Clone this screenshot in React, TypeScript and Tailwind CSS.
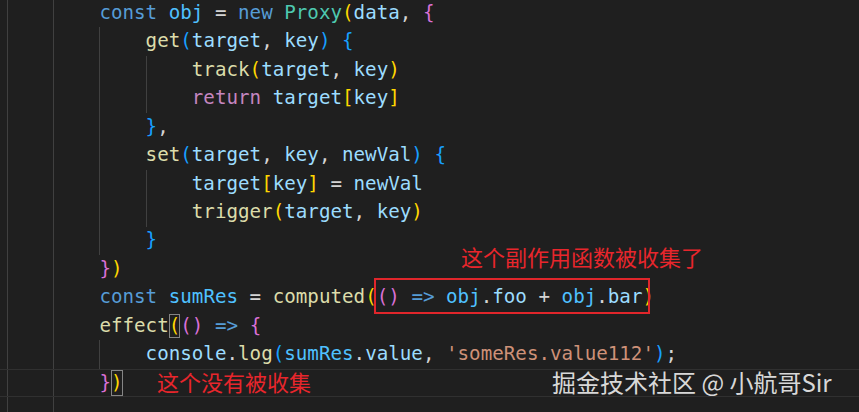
type Tok = [string, string] | [string, string, 'box' | 'boxfull']

const K = 'text-[#569cd6]'
const C = 'text-[#4fc1ff]'
const V = 'text-[#9cdcfe]'
const P = 'text-[#d4d4d4]'
const T = 'text-[#4ec9b0]'
const F = 'text-[#dcdcaa]'
const R = 'text-[#c586c0]'
const S = 'text-[#ce9178]'
const Y = 'text-[#ffd700]'
const O = 'text-[#da70d6]'
const B = 'text-[#179fff]'

const lines: { indent: number; toks: Tok[]; current?: boolean }[] = [
  { indent: 8, toks: [['const', K], [' ', P], ['obj', C], [' = ', P], ['new', K], [' ', P], ['Proxy', T], ['(', Y], ['data', V], [', ', P], ['{', O]] },
  { indent: 12, toks: [['get', F], ['(', B], ['target', V], [', ', P], ['key', V], [')', B], [' ', P], ['{', B]] },
  { indent: 16, toks: [['track', F], ['(', Y], ['target', V], [', ', P], ['key', V], [')', Y]] },
  { indent: 16, toks: [['return', R], [' ', P], ['target', V], ['[', Y], ['key', V], [']', Y]] },
  { indent: 12, toks: [['}', B], [',', P]] },
  { indent: 12, toks: [['set', F], ['(', B], ['target', V], [', ', P], ['key', V], [', ', P], ['newVal', V], [')', B], [' ', P], ['{', B]] },
  { indent: 16, toks: [['target', V], ['[', Y], ['key', V], [']', Y], [' = ', P], ['newVal', V]] },
  { indent: 16, toks: [['trigger', F], ['(', Y], ['target', V], [', ', P], ['key', V], [')', Y]] },
  { indent: 12, toks: [['}', B]] },
  { indent: 8, toks: [['}', O], [')', Y]] },
  { indent: 8, toks: [['const', K], [' ', P], ['sumRes', C], [' = ', P], ['computed', F], ['(', Y], ['(', O], [')', O], [' ', P], ['=>', K], [' ', P], ['obj', C], ['.', P], ['foo', V], [' + ', P], ['obj', C], ['.', P], ['bar', V], [')', Y]] },
  { indent: 8, toks: [['effect', F], ['(', Y, 'box'], ['(', O], [')', O], [' ', P], ['=>', K], [' ', P], ['{', O]] },
  { indent: 12, toks: [['console', V], ['.', P], ['log', F], ['(', B], ['sumRes', C], ['.', P], ['value', V], [', ', P], ["'someRes.value112'", S], [')', B], [';', P]] },
  { indent: 8, toks: [['}', O], [')', Y, 'boxfull']], current: true },
  { indent: 8, toks: [] },
]

function Line({ indent, toks, current }: { indent: number; toks: Tok[]; current?: boolean }) {
  const guides = Array.from({ length: indent / 4 })
  return (
    <div className={`flex h-[28.46px] items-center whitespace-pre pl-[7px] ${current ? 'border-y border-[#303030]' : ''}`}>
      {guides.map((_, i) => (
        <span key={i} className="h-full w-[4ch] shrink-0 border-l border-[#404040]" />
      ))}
      {toks.map(([text, cls, box], i) =>
        box ? (
          <span
            key={i}
            className={`flex items-center shadow-[inset_0_0_0_1px_#858585] ${cls} ${box === 'box' ? 'h-[24px]' : 'self-stretch'}`}
          >
            {text}
          </span>
        ) : (
          <span key={i} className={cls}>
            {text}
          </span>
        )
      )}
    </div>
  )
}

export default function App() {
  return (
    <div className="relative h-[412px] w-[859px] overflow-hidden bg-[#1f1f1f]">
      <div className="mt-[-1px] font-['DejaVu_Sans_Mono',monospace] text-[19.2px]">
        {lines.map((l, i) => (
          <Line key={i} {...l} />
        ))}
      </div>

      {/* annotations drawn over the screenshot */}
      <div className="absolute left-[374px] top-[278px] h-[36px] w-[276px] border-2 border-[#e0262b]" />

      <div className="absolute left-[461px] top-[243px] font-['Noto_Sans_CJK_SC',sans-serif] text-[22px] leading-[26px] text-[#e8262c]">
        这个副作用函数被收集了
      </div>
      <div className="absolute left-[157px] top-[368px] font-['Noto_Sans_CJK_SC',sans-serif] text-[22px] leading-[26px] text-[#e8262c]">
        这个没有被收集
      </div>
      <div className="absolute left-[552px] top-[368px] font-['Noto_Sans_CJK_SC',sans-serif] text-[24px] leading-[28px] text-[#d8d8d8]">
        掘金技术社区 @ 小航哥Sir
      </div>
    </div>
  )
}
